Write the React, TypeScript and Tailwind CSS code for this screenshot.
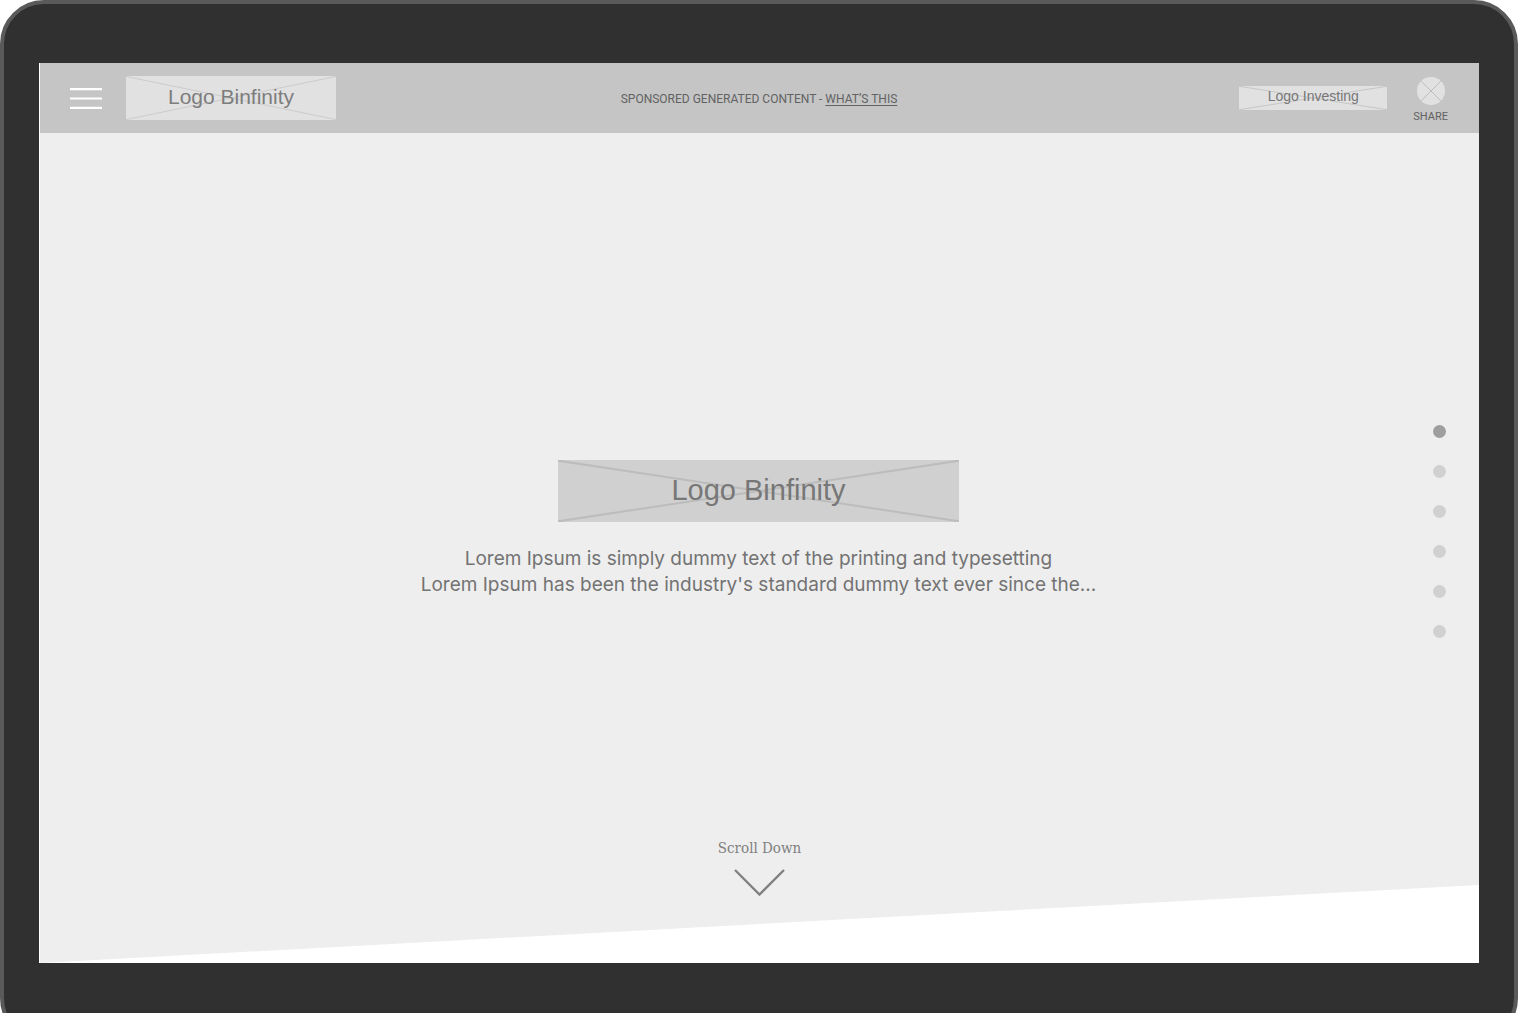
import clsx from 'clsx';

const sections = ['Intro', 'About', 'Features', 'Markets', 'Stories', 'Contact'];

type PlaceholderProps = {
  label: string;
  className?: string;
  lineClassName?: string;
};

const LogoPlaceholder = ({ label, className, lineClassName }: PlaceholderProps) => (
  <div className={clsx('relative flex justify-center font-["Liberation_Sans",sans-serif]', className)}>
    <svg
      className={clsx('absolute inset-0 h-full w-full', lineClassName)}
      viewBox="0 0 100 100"
      preserveAspectRatio="none"
      fill="none"
      stroke="currentColor"
      aria-hidden="true"
    >
      <path d="M0 1L100 99M0 99L100 1" vectorEffect="non-scaling-stroke" />
    </svg>
    <span className="relative whitespace-nowrap">{label}</span>
  </div>
);

const Header = () => (
  <header className="grid grid-cols-[1fr_auto_1fr] items-center bg-[#c5c5c5] h-[70px] pl-[30px] pr-[31px] text-[#626262]">
    <div className="flex items-center gap-6">
      <button type="button" aria-label="Open menu">
        <svg width="32" height="22" viewBox="0 0 32 22" fill="none" stroke="#fff" strokeWidth="2.2" aria-hidden="true">
          <path d="M0 2.100H32M0 11.500H32M0 20.800H32" />
        </svg>
      </button>
      <LogoPlaceholder
        label="Logo Binfinity"
        className="w-[210px] h-11 bg-[#e1e1e1] text-[21px] leading-[42px] text-[#7d7d7d]"
        lineClassName="text-[#cbcbcb]"
      />
    </div>

    <p className="pt-0.5 text-xs whitespace-nowrap">
      SPONSORED GENERATED CONTENT - <a href="#whats-this" className="underline underline-offset-2">WHAT’S THIS</a>
    </p>

    <div className="flex items-center justify-end gap-[26px]">
      <LogoPlaceholder
        label="Logo Investing"
        className="w-[148px] h-6 bg-[#e1e1e1] text-sm leading-[21px] text-[#777]"
        lineClassName="text-[#c6c6c6]"
      />
      <button type="button" className="flex flex-col items-center gap-[5px] pt-1 text-[11px] leading-[14px]">
        <svg className="size-7" viewBox="0 0 28 28" fill="none" aria-hidden="true">
          <circle cx="14" cy="14" r="14" fill="#e1e1e1" />
          <path d="M4 4L24 24M4 24L24 4" stroke="#bdbdbd" />
        </svg>
        SHARE
      </button>
    </div>
  </header>
);

const Hero = () => (
  <main className="relative flex flex-1 flex-col bg-[#eee] text-[#737373]">
    {/* Slanted edge of the next section */}
    <div className="absolute inset-x-0 bottom-0 h-[78px] bg-white [clip-path:polygon(0_100%,100%_0,100%_100%)]" />

    <div className="grid flex-1 grid-cols-[1fr_auto_1fr] items-center pt-[92px] pr-[33px] pl-[31px]">
      <div className="col-start-2 flex flex-col items-center pb-[5px]">
        <LogoPlaceholder
          label="Logo Binfinity"
          className="w-[401px] h-[62px] bg-[#d0d0d0] text-[29px] leading-[60px] text-[#777]"
          lineClassName="text-[#bcbcbc] stroke-2"
        />
        <p className="mt-6 text-center font-[Inter,sans-serif] text-[19px] leading-[26px]">
          Lorem Ipsum is simply dummy text of the printing and typesetting
          <br />
          Lorem Ipsum has been the industry's standard dummy text ever since the...
        </p>
      </div>

      <nav aria-label="Sections" className="flex flex-col gap-[27px] justify-self-end">
        {sections.map((section, index) => (
          <a
            key={section}
            href={`#${section.toLowerCase()}`}
            aria-label={section}
            className={clsx('size-[13px] rounded-full', index === 0 ? 'bg-[#9e9e9e]' : 'bg-[#d0d0d0]')}
          />
        ))}
      </nav>
    </div>

    <a
      href="#about"
      className='relative mb-[67px] flex flex-col items-center gap-[11px] self-center font-["DejaVu_Serif_Condensed","DejaVu_Serif",serif] text-[15px] leading-5 text-[#808080]'
    >
      Scroll Down
      <svg width="51" height="27" viewBox="0 0 51 27" fill="none" stroke="currentColor" strokeWidth="2.4" aria-hidden="true">
        <path d="M1 1L25.500 25.500L50 1" />
      </svg>
    </a>
  </main>
);

const App = () => {
  return (
    <div className='h-screen overflow-hidden bg-white font-["Roboto",sans-serif]'>
      {/* Laptop lid, the lower corners run off the page */}
      <div className="rounded-[44px] border-4 border-[#5a5a5a] bg-[#303030] px-[35px] pt-[59px] pb-[75px]">
        <div className="flex min-h-[calc(100vh-113px)] flex-col border-l border-white bg-white">
          <Header />
          <Hero />
        </div>
      </div>
    </div>
  );
};

export default App;
